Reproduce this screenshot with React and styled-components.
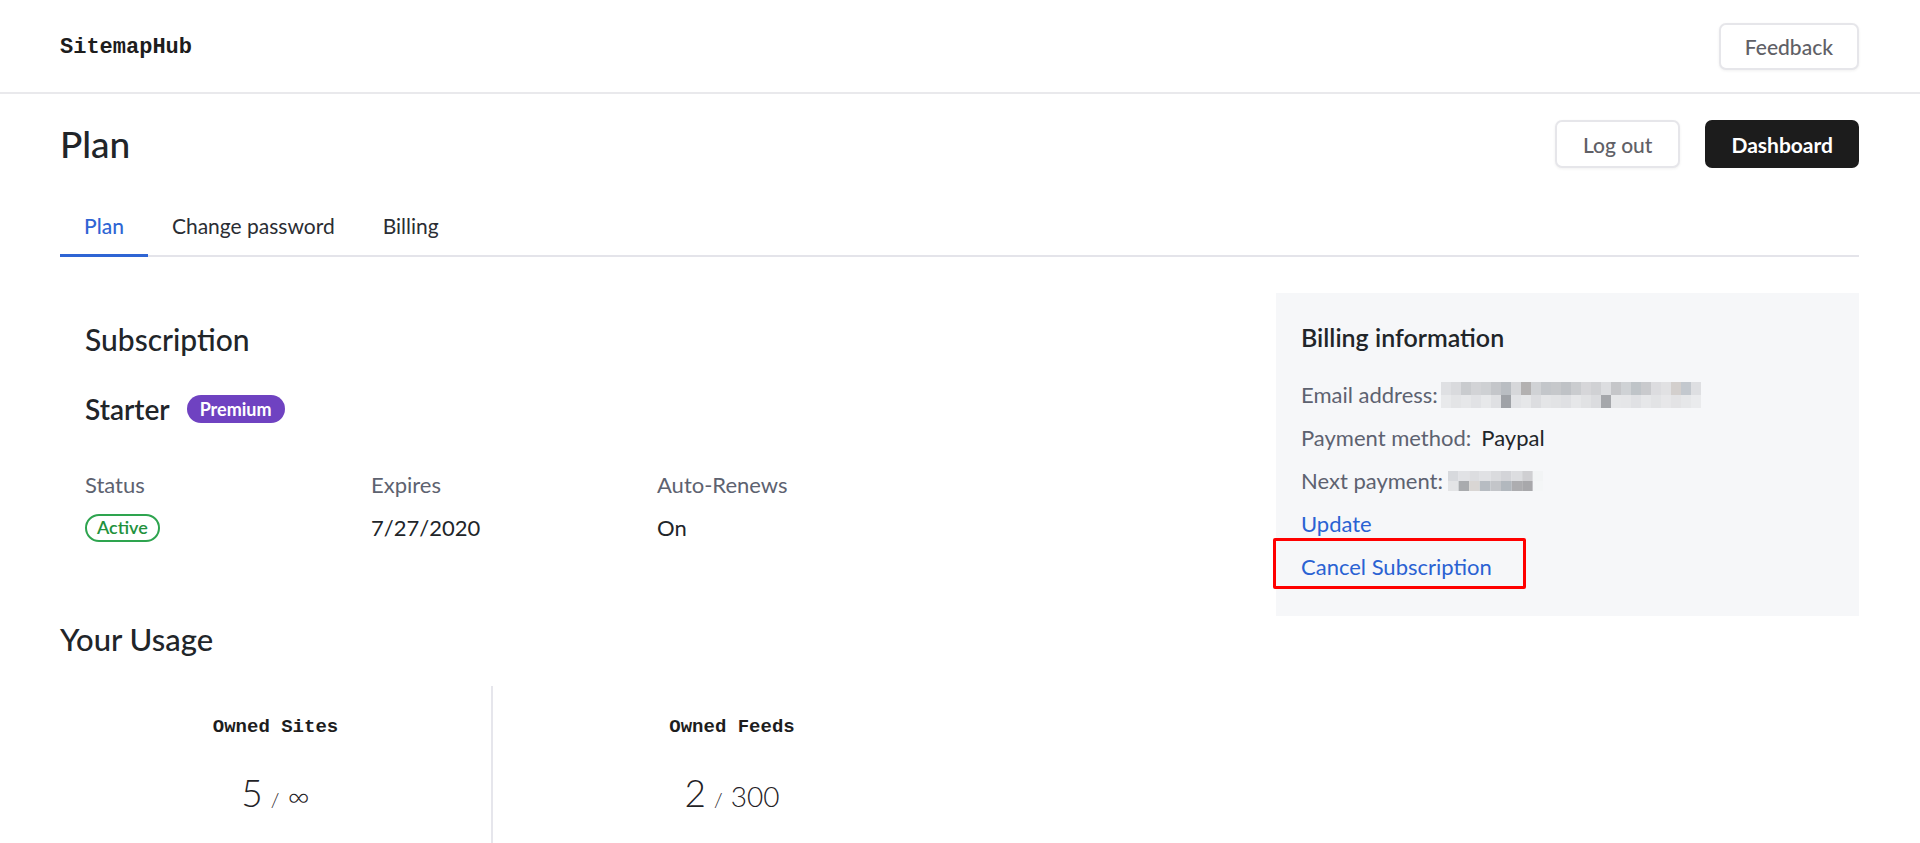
import React from 'react';
import styled, { createGlobalStyle } from 'styled-components';

const GlobalStyle = createGlobalStyle`
  html, body {
    margin: 0;
    padding: 0;
    background: #fff;
    font-family: Lato, "Noto Sans", "Liberation Sans", sans-serif;
    color: #212529;
  }
  * { box-sizing: border-box; }
`;

const Header = styled.header`
  height: 94px;
  padding: 0 61px 0 60px;
  display: flex;
  align-items: center;
  justify-content: space-between;
  border-bottom: 2px solid #e9e9ec;
`;

const Logo = styled.div`
  font-family: "Liberation Mono", "DejaVu Sans Mono", monospace;
  font-weight: 700;
  font-size: 22px;
  color: #1d1d1d;
  margin-top: 3px;
`;

const Button = styled.button`
  font-family: inherit;
  font-size: ${p => p.size || 21}px;
  font-weight: ${p => (p.dark ? 700 : 500)};
  height: ${p => p.h || 48}px;
  padding: 0 ${p => p.px || 24}px;
  border-radius: 7px;
  border: 2px solid ${p => (p.dark ? '#1c1c1c' : '#e6e6ea')};
  background: ${p => (p.dark ? '#1c1c1c' : '#fff')};
  color: ${p => (p.dark ? '#fff' : '#606066')};
  box-shadow: ${p => (p.dark ? 'none' : '0 1px 3px rgba(0,0,0,0.06)')};
  cursor: pointer;
`;

const Main = styled.main`
  padding: 0 61px 0 60px;
`;

const TitleRow = styled.div`
  margin-top: 26px;
  height: 48px;
  display: flex;
  align-items: center;
  justify-content: space-between;
`;

const PageTitle = styled.h1`
  margin: 0;
  font-size: 37px;
  font-weight: 500;
  line-height: 48px;
  color: #212529;
`;

const Actions = styled.div`
  display: flex;
  gap: 25px;
`;

const Tabs = styled.nav`
  margin-top: 28px;
  display: flex;
  border-bottom: 2px solid #e4e4ea;
`;

const Tab = styled.div`
  padding: 13px 24px 12px;
  font-size: 21px;
  line-height: 33px;
  color: ${p => (p.active ? '#2f65d4' : '#2a2d33')};
  font-weight: ${p => (p.active ? 500 : 400)};
  border-bottom: 3px solid ${p => (p.active ? '#2f65d4' : 'transparent')};
  margin-bottom: -2px;
`;

const CardsRow = styled.div`
  margin-top: 36px;
  display: flex;
  justify-content: space-between;
  gap: 40px;
`;

const SubscriptionCard = styled.section`
  padding: 25px;
  flex: 1;
`;

const SectionTitle = styled.h2`
  margin: 0;
  font-size: 30px;
  font-weight: 500;
  line-height: 42px;
  color: #212529;
`;

const PlanRow = styled.div`
  margin-top: 28px;
  height: 42px;
  display: flex;
  align-items: center;
  gap: 17px;
`;

const PlanName = styled.span`
  font-size: 28px;
  font-weight: 600;
  line-height: 42px;
`;

const Pill = styled.span`
  display: inline-flex;
  align-items: center;
  height: 28px;
  padding: 0 ${p => (p.outline ? 10 : 13)}px;
  border-radius: 14px;
  font-size: 18px;
  font-weight: ${p => (p.outline ? 600 : 700)};
  color: ${p => (p.outline ? '#22913c' : '#fff')};
  background: ${p => (p.outline ? 'transparent' : '#6f42c1')};
  border: ${p => (p.outline ? '2px solid #2ea44f' : 'none')};
`;

const InfoGrid = styled.div`
  margin-top: 38px;
  display: grid;
  grid-template-columns: 286px 286px 286px;
  row-gap: 10px;
`;

const Label = styled.div`
  font-size: 22px;
  line-height: 33px;
  color: #5d6270;
`;

const Value = styled.div`
  font-size: 22px;
  line-height: 33px;
  color: #212529;
  display: flex;
  align-items: center;
`;

const BillingCard = styled.aside`
  width: 583px;
  background: #f6f7f9;
  padding: 29px 25px 23px;
`;

const BillingTitle = styled.h3`
  margin: 0 0 25px;
  font-size: 25px;
  font-weight: 600;
  line-height: 31px;
  color: #212529;
`;

const BillingRow = styled.div`
  position: relative;
  display: flex;
  align-items: center;
  font-size: 22px;
  line-height: 33px;
  margin-bottom: 10px;
  color: #5d6270;
`;

const Strong = styled.span`
  color: #212529;
  margin-left: 10px;
`;

const Link = styled.a`
  color: #2a62d3;
  text-decoration: none;
  cursor: pointer;
`;

const Highlight = styled.span`
  position: absolute;
  left: -28px;
  top: -12px;
  width: 253px;
  height: 51px;
  border: 3px solid #ff0000;
  border-radius: 2px;
  pointer-events: none;
`;

const Mosaic = styled.svg`
  display: block;
  margin-left: ${p => p.ml || 9}px;
`;

const UsageTitle = styled.h2`
  margin: 2px 0 0;
  font-size: 31px;
  font-weight: 500;
  line-height: 42px;
  color: #212529;
`;

const UsageGrid = styled.div`
  margin-top: 26px;
  display: grid;
  grid-template-columns: 431px 480px;
`;

const UsageCell = styled.div`
  height: 160px;
  padding-top: 29px;
  text-align: center;
  border-left: ${p => (p.divider ? '2px solid #e6e6ec' : 'none')};
`;

const UsageLabel = styled.div`
  font-family: "Liberation Mono", "DejaVu Sans Mono", monospace;
  font-weight: 700;
  font-size: 19px;
  line-height: 24px;
  color: #1d1d1d;
`;

const UsageNumbers = styled.div`
  margin-top: 30px;
  display: flex;
  justify-content: center;
  align-items: baseline;
  gap: 8px;
  color: #1f2226;
  line-height: 48px;
`;

const Num = styled.span`
  font-size: ${p => p.size}px;
  font-weight: 300;
`;

const emailTop = ['dfe0e3','d9dadd','c9cbce','d2d3d6','ced0d3','c4c6ca','b9bdc2','d6d7da','b3b1b1','d0d2d5','c3c6ca','c6c8cb','bfc2c6','cacccf','d6d6d9','d0d1d4','dcdde0','c5c6c9','cfd2d5','bfc4c8','c9cacd','dcdcdf','e1e1e3','d3cfcd','c3c8ce','dedfe2'];
const emailBottom = ['e8e9eb','e3e4e6','e6e7e9','e1e2e5','e7e8ea','dfe0e3','9fa2a7','e2e3e6','e6e7e9','dcdde0','e4e5e7','e2e3e5','dfe0e3','e6e7e9','e1e2e4','dbdcdf','a5a7ab','e6e7e9','e5e6e8','e0e1e4','e6e7e9','e2e3e5','e7e7e9','e3e3e5','e6e7e9','eaebed'];
const payTop = ['d7d9dd','e1e2e5','dcdde0','e0e1e4','dadbde','d3d4d8','dcdde0','cfcfd2','f2f4f5'];
const payBottom = ['e3e4e6','a9abae','d9d6d4','b7bcc2','c3c5c9','b2b8be','adadb0','a8a8ab','f4f6f7'];

const Pixelated = ({ top, bottom, cell, rowH, ml }) => (
  <Mosaic ml={ml} width={top.length * cell} height={rowH * 2} viewBox={`0 0 ${top.length * cell} ${rowH * 2}`}>
    {top.map((c, i) => (
      <rect key={'t' + i} x={i * cell} y={0} width={cell} height={rowH} fill={'#' + c} />
    ))}
    {bottom.map((c, i) => (
      <rect key={'b' + i} x={i * cell} y={rowH} width={cell} height={rowH} fill={'#' + c} />
    ))}
  </Mosaic>
);

export default function App() {
  return (
    <>
      <GlobalStyle />
      <Header>
        <Logo>SitemapHub</Logo>
        <Button h={47} px={24}>Feedback</Button>
      </Header>
      <Main>
        <TitleRow>
          <PageTitle>Plan</PageTitle>
          <Actions>
            <Button px={26}>Log out</Button>
            <Button dark px={24}>Dashboard</Button>
          </Actions>
        </TitleRow>

        <Tabs>
          <Tab active>Plan</Tab>
          <Tab>Change password</Tab>
          <Tab>Billing</Tab>
        </Tabs>

        <CardsRow>
          <SubscriptionCard>
            <SectionTitle>Subscription</SectionTitle>
            <PlanRow>
              <PlanName>Starter</PlanName>
              <Pill>Premium</Pill>
            </PlanRow>
            <InfoGrid>
              <Label>Status</Label>
              <Label>Expires</Label>
              <Label>Auto-Renews</Label>
              <Value><Pill outline>Active</Pill></Value>
              <Value>7/27/2020</Value>
              <Value>On</Value>
            </InfoGrid>
          </SubscriptionCard>

          <BillingCard>
            <BillingTitle>Billing information</BillingTitle>
            <BillingRow>
              Email address:
              <Pixelated top={emailTop} bottom={emailBottom} cell={10} rowH={13} ml={3} />
            </BillingRow>
            <BillingRow>
              Payment method: <Strong>Paypal</Strong>
            </BillingRow>
            <BillingRow>
              Next payment:
              <Pixelated top={payTop} bottom={payBottom} cell={10.6} rowH={10} ml={5} />
            </BillingRow>
            <BillingRow>
              <Link>Update</Link>
            </BillingRow>
            <BillingRow>
              <Highlight />
              <Link>Cancel Subscription</Link>
            </BillingRow>
          </BillingCard>
        </CardsRow>

        <UsageTitle>Your Usage</UsageTitle>
        <UsageGrid>
          <UsageCell>
            <UsageLabel>Owned Sites</UsageLabel>
            <UsageNumbers>
              <Num size={37}>5</Num>
              <Num size={20}>/</Num>
              <Num size={30}>∞</Num>
            </UsageNumbers>
          </UsageCell>
          <UsageCell divider>
            <UsageLabel>Owned Feeds</UsageLabel>
            <UsageNumbers>
              <Num size={37}>2</Num>
              <Num size={20}>/</Num>
              <Num size={28}>300</Num>
            </UsageNumbers>
          </UsageCell>
        </UsageGrid>
      </Main>
    </>
  );
}
